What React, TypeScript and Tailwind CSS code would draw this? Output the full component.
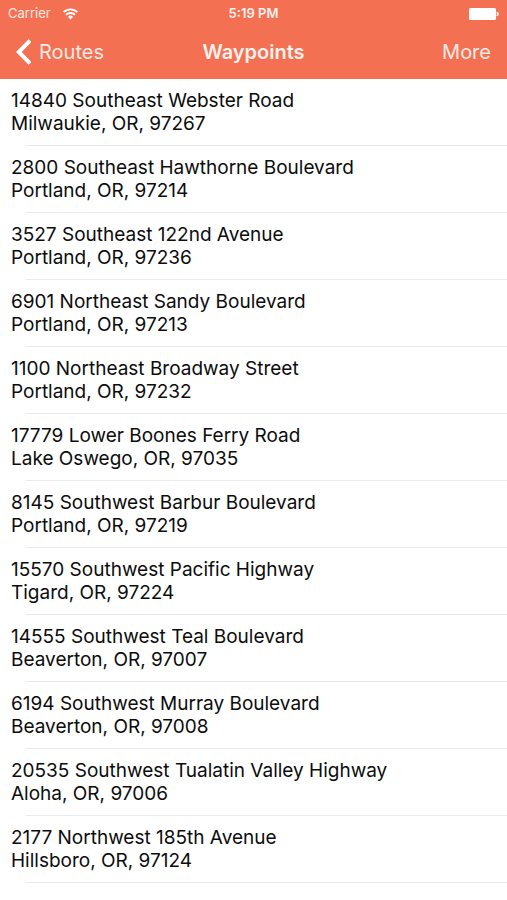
import { FC } from "react";

interface Waypoint {
  street: string;
  city: string;
}

const waypoints: Waypoint[] = [
  { street: "14840 Southeast Webster Road", city: "Milwaukie, OR, 97267" },
  { street: "2800 Southeast Hawthorne Boulevard", city: "Portland, OR, 97214" },
  { street: "3527 Southeast 122nd Avenue", city: "Portland, OR, 97236" },
  { street: "6901 Northeast Sandy Boulevard", city: "Portland, OR, 97213" },
  { street: "1100 Northeast Broadway Street", city: "Portland, OR, 97232" },
  { street: "17779 Lower Boones Ferry Road", city: "Lake Oswego, OR, 97035" },
  { street: "8145 Southwest Barbur Boulevard", city: "Portland, OR, 97219" },
  { street: "15570 Southwest Pacific Highway", city: "Tigard, OR, 97224" },
  { street: "14555 Southwest Teal Boulevard", city: "Beaverton, OR, 97007" },
  { street: "6194 Southwest Murray Boulevard", city: "Beaverton, OR, 97008" },
  { street: "20535 Southwest Tualatin Valley Highway", city: "Aloha, OR, 97006" },
  { street: "2177 Northwest 185th Avenue", city: "Hillsboro, OR, 97124" },
];

const WifiIcon: FC = () => (
  <svg width="15" height="12" viewBox="0 0 15 12" fill="none" stroke="currentColor" strokeWidth="1.9" aria-hidden="true">
    <path d="M0.7 4.2a9.6 9.6 0 0 1 13.6 0" />
    <path d="M3 6.8a6.4 6.4 0 0 1 9 0" />
    <path d="M7.5 11.4 5 8.9a3.5 3.5 0 0 1 5 0z" fill="currentColor" stroke="none" />
  </svg>
);

const BatteryIcon: FC = () => (
  <svg width="30" height="12" viewBox="0 0 30 12" fill="currentColor" aria-hidden="true">
    <rect width="27" height="12" rx="1.5" />
    <path d="M27.6 3.8c1.500.3 2.200 1 2.200 2.200s-.7 1.900-2.200 2.200z" />
  </svg>
);

const StatusBar: FC = () => (
  <div className="grid grid-cols-3 items-center h-7 px-2 text-[13px]">
    <div className="flex items-center gap-3">
      <span className="text-white/85">Carrier</span>
      <WifiIcon />
    </div>
    <span className="text-center font-semibold text-white/90">5:19 PM</span>
    <div className="flex justify-end">
      <BatteryIcon />
    </div>
  </div>
);

const NavBar: FC = () => (
  <nav className="grid grid-cols-3 items-center h-12 px-4 text-[20px]">
    <button type="button" className="flex items-center gap-2">
      <svg width="15" height="26" viewBox="0 0 15 26" fill="none" stroke="currentColor" strokeWidth="4" aria-hidden="true">
        <path d="M14 1.6 2.8 13 14 24.4" />
      </svg>
      <span className="text-white/85">Routes</span>
    </button>
    <h1 className="text-center font-semibold text-white/90">Waypoints</h1>
    <button type="button" className="justify-self-end text-white/85">More</button>
  </nav>
);

export default function App() {
  return (
    <div className="min-h-screen bg-white text-[#0c0c0c] font-['Inter',sans-serif]">
      <header className="bg-[#f47052] text-white pb-[3px]">
        <StatusBar />
        <NavBar />
      </header>
      <ul>
        {waypoints.map((waypoint) => (
          <li key={waypoint.street}>
            <div className="py-[10px] px-[11px] text-[19px] leading-[23px]">
              <p>{waypoint.street}</p>
              <p>{waypoint.city}</p>
            </div>
            <div className="ml-[26px] h-px bg-[#eaeaeb]" />
          </li>
        ))}
      </ul>
    </div>
  );
}
